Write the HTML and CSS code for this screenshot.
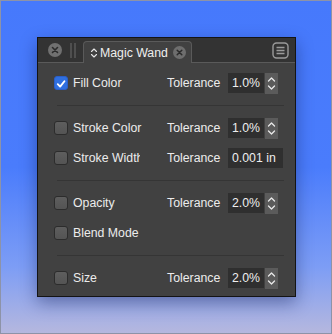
FILE: index.html
```html
<!DOCTYPE html>
<html lang="en">
<head>
  <meta charset="UTF-8">
  <meta name="viewport" content="width=device-width, initial-scale=1.0">
  <link rel="stylesheet" href="styles.css">
</head>
<body>

<div class="panel">
  <div class="tabbar">
    <span class="close-dot">
      <svg width="14" height="14" viewBox="0 0 14 14"><path d="M4.5 4.5 L9.5 9.5 M9.5 4.5 L4.5 9.5" stroke="#2b2b2b" stroke-width="1.6" stroke-linecap="round"/></svg>
    </span>
    <span class="grip"><i></i><i></i></span>
    <div class="tab">
      <svg class="tab-chev" width="8" height="12" viewBox="0 0 8 12"><path d="M1.5 4.5 L4 2 L6.5 4.5 M1.5 7.5 L4 10 L6.5 7.5" fill="none" stroke="#e8e8e8" stroke-width="1.1" stroke-linecap="round" stroke-linejoin="round"/></svg>
      <span class="tab-title">Magic Wand</span>
      <span class="close-dot small">
        <svg width="13" height="13" viewBox="0 0 13 13"><path d="M4.2 4.2 L8.8 8.8 M8.8 4.2 L4.2 8.8" stroke="#2b2b2b" stroke-width="1.5" stroke-linecap="round"/></svg>
      </span>
    </div>
    <div class="spacer"></div>
    <svg class="menu" width="17" height="17" viewBox="0 0 17 17"><rect x="1" y="1" width="15" height="15" rx="3.5" fill="none" stroke="#9a9a9a" stroke-width="1.4"/><path d="M4.5 5.5 H12.5 M4.5 8.5 H12.5 M4.5 11.5 H12.5" stroke="#9a9a9a" stroke-width="1.4"/></svg>
  </div>

  <div class="content">
    <div class="row">
      <label class="check"><span class="box on"><svg width="14" height="14" viewBox="0 0 14 14"><path d="M3.2 7.2 L6 10 L11 3.8" fill="none" stroke="#fff" stroke-width="2.2" stroke-linecap="round" stroke-linejoin="round"/></svg></span>Fill Color</label>
      <span class="tol">Tolerance</span>
      <span class="field">1.0%</span>
      <span class="stepper"><svg width="13" height="21" viewBox="0 0 13 21"><path d="M3.5 8 L6.5 5 L9.5 8 M3.5 13 L6.5 16 L9.5 13" fill="none" stroke="#e8e8e8" stroke-width="1.3" stroke-linecap="round" stroke-linejoin="round"/></svg></span>
    </div>
    <div class="sep"></div>
    <div class="row">
      <label class="check"><span class="box"></span>Stroke Color</label>
      <span class="tol">Tolerance</span>
      <span class="field">1.0%</span>
      <span class="stepper"><svg width="13" height="21" viewBox="0 0 13 21"><path d="M3.5 8 L6.5 5 L9.5 8 M3.5 13 L6.5 16 L9.5 13" fill="none" stroke="#e8e8e8" stroke-width="1.3" stroke-linecap="round" stroke-linejoin="round"/></svg></span>
    </div>
    <div class="row">
      <label class="check"><span class="box"></span><span class="clip">Stroke Width</span></label>
      <span class="tol">Tolerance</span>
      <span class="field wide">0.001 in</span>
    </div>
    <div class="sep"></div>
    <div class="row">
      <label class="check"><span class="box"></span>Opacity</label>
      <span class="tol">Tolerance</span>
      <span class="field">2.0%</span>
      <span class="stepper"><svg width="13" height="21" viewBox="0 0 13 21"><path d="M3.5 8 L6.5 5 L9.5 8 M3.5 13 L6.5 16 L9.5 13" fill="none" stroke="#e8e8e8" stroke-width="1.3" stroke-linecap="round" stroke-linejoin="round"/></svg></span>
    </div>
    <div class="row">
      <label class="check"><span class="box"></span>Blend Mode</label>
    </div>
    <div class="sep"></div>
    <div class="row">
      <label class="check"><span class="box"></span>Size</label>
      <span class="tol">Tolerance</span>
      <span class="field">2.0%</span>
      <span class="stepper"><svg width="13" height="21" viewBox="0 0 13 21"><path d="M3.5 8 L6.5 5 L9.5 8 M3.5 13 L6.5 16 L9.5 13" fill="none" stroke="#e8e8e8" stroke-width="1.3" stroke-linecap="round" stroke-linejoin="round"/></svg></span>
    </div>
  </div>
</div>

</body>
</html>
```

FILE: styles.css
```css
html {
  margin: 0;
  padding: 0;
}

body {
  margin: 0;
  width: 332px;
  height: 334px;
  box-sizing: border-box;
  border: 1px solid #8d93a8;
  padding: 36px 0 0 36px;
  background: linear-gradient(#4679fc 0%, #4a7cfc 50%, #7d9df5 80%, #b6b8de 100%);
  font-family: "Liberation Sans", Arial, sans-serif;
  font-size: 12.3px;
  color: #ececec;
}

.panel {
  width: 259px;
  height: 260px;
  box-sizing: border-box;
  background-color: #414141;
  border: 1px solid #141414;
  box-shadow: 0 6px 16px rgba(10, 20, 70, 0.4);
  display: flex;
  flex-direction: column;
}

.tabbar {
  height: 25px;
  box-sizing: border-box;
  background-color: #333;
  border-bottom: 1px solid #5a5a5a;
  display: flex;
  align-items: center;
  padding-left: 10px;
  padding-right: 6px;
}

.close-dot {
  width: 14px;
  height: 14px;
  border-radius: 50%;
  background-color: #707070;
  display: flex;
}

.close-dot.small {
  width: 13px;
  height: 13px;
  background-color: #6e6e6e;
}

.grip {
  display: flex;
  gap: 2px;
  margin-left: 8px;
}

.grip i {
  width: 2px;
  height: 15px;
  background-color: #4f4f4f;
}

.tab {
  align-self: flex-end;
  margin-left: 7px;
  margin-bottom: -1px;
  width: 109px;
  height: 22px;
  box-sizing: border-box;
  background-color: #414141;
  border: 1px solid #5a5a5a;
  border-bottom: none;
  border-radius: 4px 4px 0 0;
  display: flex;
  align-items: center;
  padding-left: 6px;
}

.tab-chev {
  margin-right: 2px;
}

.tab-title {
  font-size: 12.3px;
  color: #eee;
  flex: 1;
}

.tab .close-dot {
  margin-right: 5px;
}

.spacer {
  flex: 1;
}

.menu {
  margin-top: 1px;
}

.content {
  padding: 5px 11px 0 16px;
}

.row {
  height: 30px;
  display: flex;
  align-items: center;
}

.check {
  width: 113px;
  display: flex;
  align-items: center;
  white-space: nowrap;
}

.clip {
  width: 67px;
  overflow: hidden;
}

.box {
  width: 14px;
  height: 14px;
  box-sizing: border-box;
  border-radius: 3px;
  border: 1px solid #2c2c2c;
  background: linear-gradient(#5e5e5e, #545454);
  margin-right: 5px;
  display: flex;
}

.box.on {
  border-color: #2a5fc8;
  background: #2f6fe0;
}

.tol {
  width: 61px;
}

.field {
  width: 36px;
  height: 20px;
  line-height: 20px;
  box-sizing: border-box;
  padding-left: 4px;
  background-color: #2f2f2f;
  color: #eee;
}

.field.wide {
  width: 55px;
}

.stepper {
  width: 13px;
  height: 21px;
  margin-left: 1px;
  background-color: #5b5b5b;
  display: flex;
}

.sep {
  height: 1px;
  margin: 7px 0 7px 3px;
  background-color: #353535;
}
```
